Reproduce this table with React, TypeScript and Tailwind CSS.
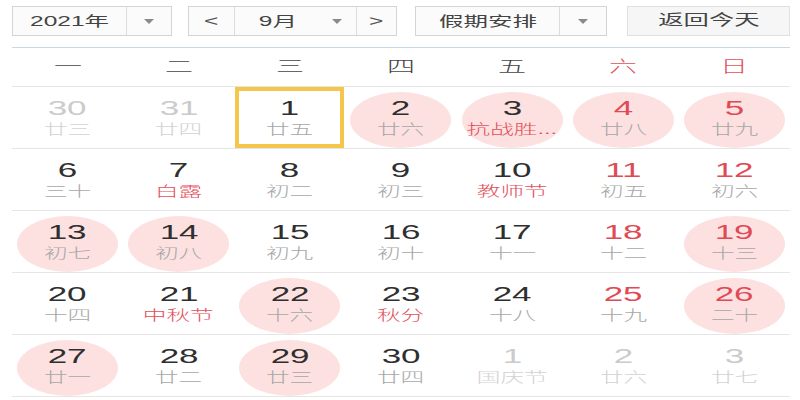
import React from "react";

type Cell = {
  n: number;
  l: string;
  other?: boolean;
  today?: boolean;
  circle?: boolean;
  wk?: boolean;
  fest?: boolean;
};

const rows: Cell[][] = [
  [
    { n: 30, l: "廿三", other: true },
    { n: 31, l: "廿四", other: true },
    { n: 1, l: "廿五", today: true },
    { n: 2, l: "廿六", circle: true },
    { n: 3, l: "抗战胜...", circle: true, fest: true },
    { n: 4, l: "廿八", circle: true, wk: true },
    { n: 5, l: "廿九", circle: true, wk: true },
  ],
  [
    { n: 6, l: "三十" },
    { n: 7, l: "白露", fest: true },
    { n: 8, l: "初二" },
    { n: 9, l: "初三" },
    { n: 10, l: "教师节", fest: true },
    { n: 11, l: "初五", wk: true },
    { n: 12, l: "初六", wk: true },
  ],
  [
    { n: 13, l: "初七", circle: true },
    { n: 14, l: "初八", circle: true },
    { n: 15, l: "初九" },
    { n: 16, l: "初十" },
    { n: 17, l: "十一" },
    { n: 18, l: "十二", wk: true },
    { n: 19, l: "十三", circle: true, wk: true },
  ],
  [
    { n: 20, l: "十四" },
    { n: 21, l: "中秋节", fest: true },
    { n: 22, l: "十六", circle: true },
    { n: 23, l: "秋分", fest: true },
    { n: 24, l: "十八" },
    { n: 25, l: "十九", wk: true },
    { n: 26, l: "二十", circle: true, wk: true },
  ],
  [
    { n: 27, l: "廿一", circle: true },
    { n: 28, l: "廿二" },
    { n: 29, l: "廿三", circle: true },
    { n: 30, l: "廿四" },
    { n: 1, l: "国庆节", other: true },
    { n: 2, l: "廿六", other: true },
    { n: 3, l: "廿七", other: true },
  ],
];

const Caret = () => (
  <svg width="10" height="5" viewBox="0 0 10 5">
    <path d="M0 0 H10 L5 5 Z" fill="#8a8a8a" />
  </svg>
);

const S = ({ children, className = "" }: { children: React.ReactNode; className?: string }) => (
  <span className={"inline-block scale-x-[1.75] whitespace-nowrap " + className}>{children}</span>
);

function DayCell({ c }: { c: Cell }) {
  let numColor = "text-[#2f2f2f]";
  if (c.wk) numColor = "text-[#df4a55]";
  if (c.other) numColor = "text-[#cbcbcb]";
  let lunColor = "text-[#a8a8a8]";
  if (c.fest) lunColor = "text-[#e3505a]";
  if (c.other) lunColor = "text-[#d2d2d2]";

  const content = (
    <div className="flex flex-col items-center mt-[3px]">
      <S className={"text-[20px] leading-[22px] " + numColor}>{c.n}</S>
      <S className={"text-[13.5px] leading-[22px] font-light " + lunColor}>{c.l}</S>
    </div>
  );

  return (
    <div className="flex items-center justify-center h-[61px]">
      {c.today ? (
        <div className="w-[109px] h-[61px] border-[4px] border-[#f4c74a] flex items-center justify-center">
          {content}
        </div>
      ) : c.circle ? (
        <div className="w-[101px] h-[56px] mt-[4px] rounded-[50%] bg-[#fde1e1] flex items-center justify-center">
          <div className="-mt-[4px]">{content}</div>
        </div>
      ) : (
        content
      )}
    </div>
  );
}

export default function App() {
  const weekdays = ["一", "二", "三", "四", "五", "六", "日"];
  return (
    <div className="w-[800px] h-[400px] overflow-hidden bg-white font-['Liberation_Sans','Noto_Sans_CJK_SC',sans-serif]">
      <div className="flex items-center pt-[6px] pl-[12px] h-[36px]">
        <div className="flex w-[160px] h-[30px] border border-[#d4d4d4] bg-[#fbfbfb]">
          <div className="w-[113px] flex items-center justify-center text-[14px] text-[#444]">
            <S>2021年</S>
          </div>
          <div className="flex-1 border-l border-[#dcdcdc] flex items-center justify-center">
            <Caret />
          </div>
        </div>
        <div className="flex w-[209px] h-[30px] ml-[16px] border border-[#d4d4d4] bg-[#fbfbfb]">
          <div className="w-[45px] flex items-center justify-center text-[14px] text-[#555]">
            <S>&lt;</S>
          </div>
          <div className="w-[122px] border-l border-[#dcdcdc] flex items-center text-[14px] text-[#444]">
            <div className="ml-[36px] w-[14px] flex justify-center">
              <S>9月</S>
            </div>
            <div className="ml-[47px]">
              <Caret />
            </div>
          </div>
          <div className="flex-1 border-l border-[#dcdcdc] flex items-center justify-center text-[14px] text-[#555]">
            <S>&gt;</S>
          </div>
        </div>
        <div className="flex w-[192px] h-[30px] ml-[18px] border border-[#d4d4d4] bg-[#fbfbfb]">
          <div className="w-[143px] flex items-center justify-center text-[14px] text-[#444]">
            <S>假期安排</S>
          </div>
          <div className="flex-1 border-l border-[#dcdcdc] flex items-center justify-center">
            <Caret />
          </div>
        </div>
        <div className="flex w-[163px] h-[30px] ml-[20px] border border-[#e0e0e0] bg-[#f6f6f6] items-center justify-center text-[14.5px] text-[#444]">
          <S>返回今天</S>
        </div>
      </div>

      <div className="mx-[12px] w-[778px] mt-[11px]">
        <div className="grid grid-cols-7 h-[40px] border-t border-b border-t-[#c9d9e4] border-b-[#e6e6e6]">
          {weekdays.map((w, i) => (
            <div
              key={w}
              className={
                "flex items-center justify-center text-[16px] font-light " +
                (i >= 5 ? "text-[#e0505a]" : "text-[#444]")
              }
            >
              <S>{w}</S>
            </div>
          ))}
        </div>
        {rows.map((r, ri) => (
          <div key={ri} className="grid grid-cols-7 border-b border-[#e6e6e6]">
            {r.map((c, ci) => (
              <DayCell key={ci} c={c} />
            ))}
          </div>
        ))}
      </div>
    </div>
  );
}
